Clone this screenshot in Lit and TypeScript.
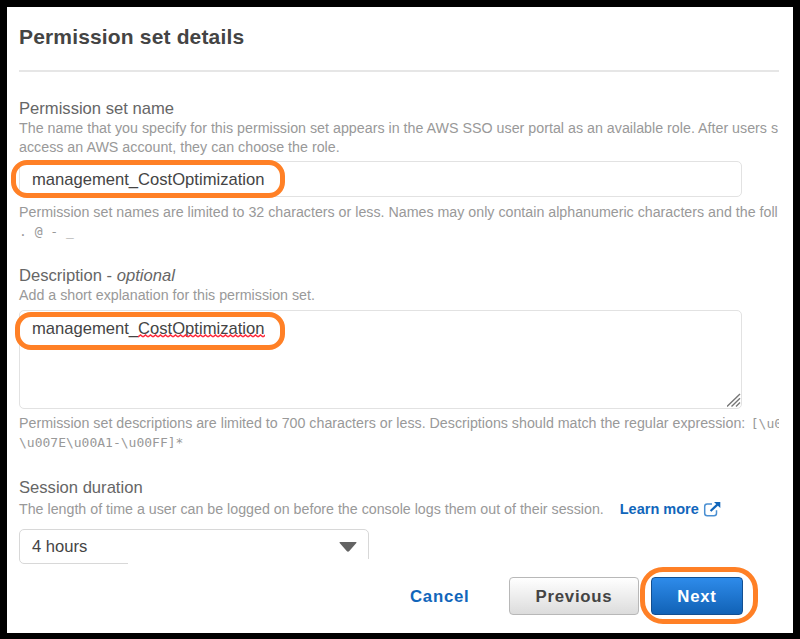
import { LitElement, html, css, svg } from "lit";
import { customElement } from "lit/decorators.js";

const externalIcon = html`<svg class="ext" width="18" height="17" viewBox="0 0 18 17" fill="none">
  <path d="M9 3H4.2Q1.7 3 1.7 5.5V12.3Q1.7 14.8 4.2 14.8H11Q13.5 14.8 13.5 12.3V9.2" stroke="#4a8fd2" stroke-width="1.5"/>
  <path d="M7.6 10L14.4 3.6" stroke="#1166bb" stroke-width="2.2"/>
  <path d="M11 1H17.3V7Z" fill="#1166bb"/>
</svg>`;

const caret = svg`<path d="M1 0H17Q18 0 17.3 1.1L10.3 9Q9 10.3 7.7 9L0.7 1.1Q0 0 1 0Z" fill="#636363"/>`;

@customElement("app-root")
export class AppRoot extends LitElement {
  static styles = css`
    :host {
      display: block;
      box-sizing: border-box;
      height: 639px;
      width: 800px;
      padding: 7px 7px 6px;
      background: #000;
      font-family: "Liberation Sans", Arial, sans-serif;
    }
    * { box-sizing: border-box; }
    .panel {
      height: 626px;
      background: #fff;
      padding: 17px 0 0 12px;
      overflow: hidden;
    }
    .clip { width: 760px; overflow: hidden; }
    h1 {
      margin: 0;
      height: 46px;
      font-size: 21px;
      line-height: 25px;
      letter-spacing: 0.16px;
      color: #444;
    }
    .rule { height: 2px; background: #e6e6e6; margin-bottom: 27px; }
    .label { font-size: 16.6px; line-height: 20px; height: 20px; color: #666; white-space: nowrap; }
    .help {
      font-size: 14.24px;
      line-height: 19px;
      color: #999;
      white-space: nowrap;
    }
    .intro { font-size: 14.28px; }
    .mono { font-family: "DejaVu Sans Mono", monospace; font-size: 13px; line-height: 1; }
    .regex { margin-left: 1.5px; }
    .field {
      position: relative;
      width: 723px;
      border: 1.5px solid #e2e2e2;
      border-radius: 5px;
      font-size: 16.6px;
      color: #444;
      padding-left: 12px;
    }
    .name { height: 36px; line-height: 35px; margin-top: 4px; margin-bottom: 6px; }
    .desc { height: 99px; line-height: 20px; padding-top: 8px; margin: 5px 0; }
    .spell { position: relative; }
    .wave { position: absolute; left: 0; top: 15px; width: 127px; height: 4px; }
    .grip { position: absolute; right: 0; bottom: 1px; }
    .ring { position: absolute; border: 5px solid #ff8026; border-radius: 16px; }
    .r1 { left: -9px; top: -2px; width: 274px; height: 38px; }
    .r2 { left: -5px; top: 1px; width: 270px; height: 38px; }
    .gap1 { height: 25px; }
    .gap2 { height: 26px; }
    .session { display: flex; align-items: center; margin-top: 2px; }
    .learn { margin-left: 16px; font-weight: bold; font-size: 14.5px; color: #1166bb; }
    .ext { margin-left: 4px; }
    .select {
      display: flex;
      align-items: center;
      justify-content: space-between;
      width: 350px;
      height: 35px;
      margin-top: 10px;
      border: 1.5px solid #d8d8d8;
      border-radius: 5px;
      padding: 0 11px 0 12px;
      font-size: 16.6px;
      color: #444;
    }
    .footer {
      position: relative;
      display: flex;
      align-items: flex-start;
      height: 74px;
      margin: -5px 0 0 109px;
      padding-top: 18px;
      background: #fff;
      font-weight: bold;
      font-size: 16.8px;
      letter-spacing: 0.75px;
      line-height: 39px;
    }
    .cancel { width: 99px; margin-left: 282px; color: #1166bb; }
    .btn {
      position: relative;
      height: 38px;
      line-height: 38px;
      border-radius: 4px;
      text-align: center;
    }
    .prev { width: 130px; border: 1px solid #b8b8b8; background: linear-gradient(#fff, #dcdcdc); color: #444; }
    .next { width: 92px; margin-left: 12px; border: 1px solid #134f91; background: linear-gradient(#2e8bea, #1162b6); color: #fff; }
    .r3 { left: -12px; top: -11px; width: 118px; height: 57px; border-radius: 23px; }
  `;

  render() {
    return html`<main class="panel">
      <div class="clip">
        <h1>Permission set details</h1>
        <div class="rule"></div>
        <div class="label">Permission set name</div>
        <div class="help intro">The name that you specify for this permission set appears in the AWS SSO user portal as an available role. After users s<br>access an AWS account, they can choose the role.</div>
      </div>
      <div class="field name">management_CostOptimization<div class="ring r1"></div></div>
      <div class="clip help">Permission set names are limited to 32 characters or less. Names may only contain alphanumeric characters and the foll<br><span class="mono">. @ - _</span></div>
      <div class="gap1"></div>
      <div class="label">Description - <i>optional</i></div>
      <div class="help">Add a short explanation for this permission set.</div>
      <div class="field desc">management_<span class="spell">CostOptimization<svg class="wave" viewBox="0 0 127 4"><defs><pattern id="w" width="5" height="4" patternUnits="userSpaceOnUse"><path d="M0 3L2.5 1L5 3" fill="none" stroke="#ff2b3b" stroke-width="1.6"/></pattern></defs><rect width="127" height="4" fill="url(#w)"/></svg></span>
        <svg class="grip" width="14" height="14" viewBox="0 0 14 14"><path d="M0 13.5L13 1M4.5 13.5L13 5.2M9 13.5L13 9.5" stroke="#777" stroke-width="1.4"/></svg>
        <div class="ring r2"></div>
      </div>
      <div class="clip help">Permission set descriptions are limited to 700 characters or less. Descriptions should match the regular expression: <span class="mono regex">[\\u0</span><br><span class="mono">\\u007E\\u00A1-\\u00FF]*</span></div>
      <div class="gap2"></div>
      <div class="label">Session duration</div>
      <div class="help session">The length of time a user can be logged on before the console logs them out of their session.<span class="learn">Learn more</span>${externalIcon}</div>
      <div class="select">4 hours<svg width="18" height="10" viewBox="0 0 18 10">${caret}</svg></div>
      <div class="footer">
        <span class="cancel">Cancel</span>
        <div class="btn prev">Previous</div>
        <div class="btn next">Next<div class="ring r3"></div></div>
      </div>
    </main>`;
  }
}
